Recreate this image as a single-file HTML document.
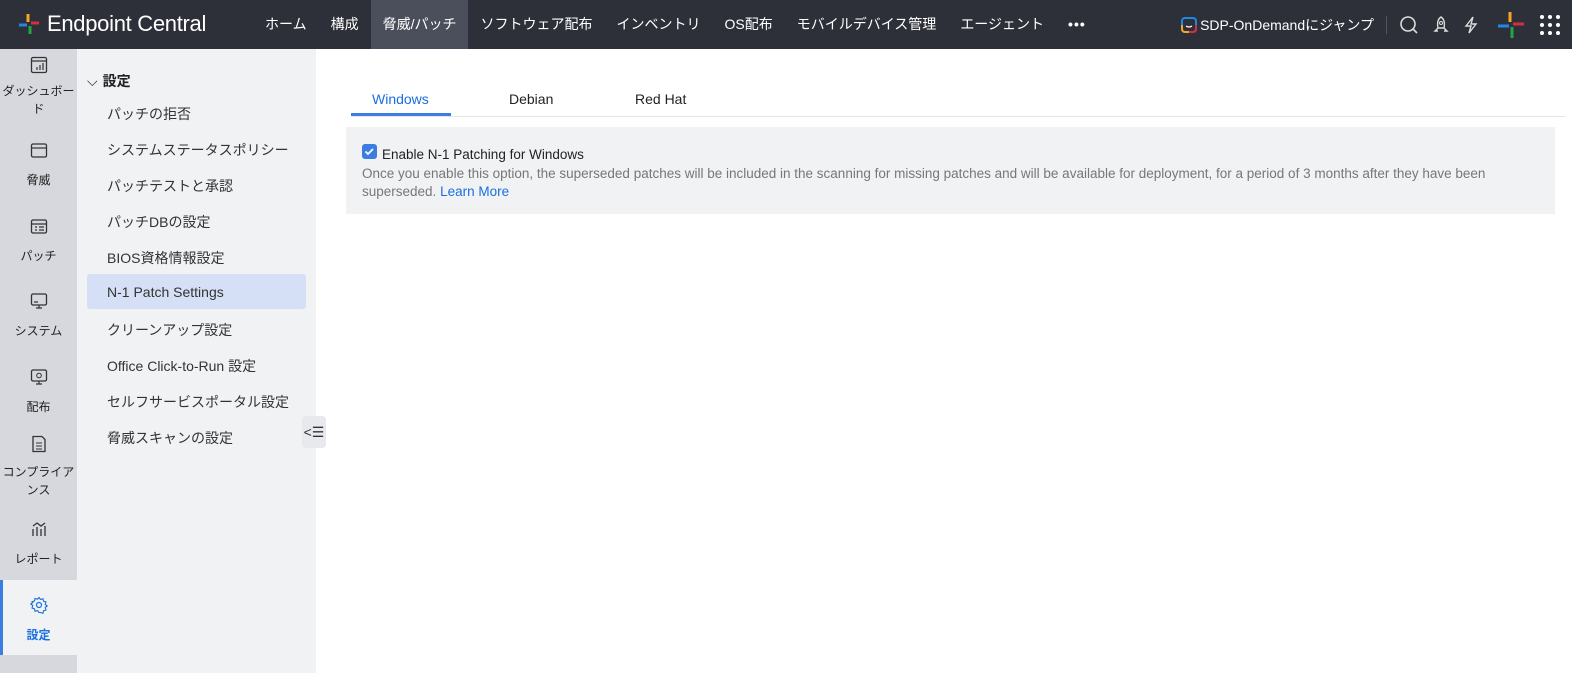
<!DOCTYPE html>
<html><head><meta charset="utf-8">
<style>
*{box-sizing:border-box;margin:0;padding:0}
body{width:1572px;height:673px;overflow:hidden;font-family:"Liberation Sans","Noto Sans CJK JP",sans-serif;background:#fff;position:relative}
.top{position:absolute;left:0;top:0;width:1572px;height:49px;background:#2d3039;color:#fff}
.logo{position:absolute;left:17px;top:11px;display:flex;align-items:center;gap:6px;font-size:22px;letter-spacing:-0.3px}
.nav{position:absolute;left:253px;top:0;display:flex;height:49px}
.nav div{padding:0 12px;line-height:49px;font-size:14px}
.nav .act{background:#4b4f5c}
.rt{position:absolute;right:0;top:0;height:49px;display:flex;align-items:center}
.s1{position:absolute;left:0;top:49px;width:77px;height:624px;background:#d7d8dd}
.s1 .it{position:absolute;left:0;width:77px;text-align:center;font-size:12px;color:#222;line-height:18px}
.s1 svg{display:block;margin:0 auto 12px}
.s2{position:absolute;left:77px;top:49px;width:239px;height:624px;background:#f1f2f4}
.s2 .i{position:absolute;left:30px;font-size:14px;color:#333}
.sel{position:absolute;left:10px;top:225px;width:219px;height:35px;background:#d5e0f6;border-radius:3px}
.tabs{position:absolute;left:351px;top:84px;width:1214px;height:33px;border-bottom:1px solid #e4e6ea;font-size:14px;color:#222}
.tabs div{position:absolute;top:7px}
.card{position:absolute;left:346px;top:127px;width:1209px;height:87px;background:#f1f2f4}
</style></head><body>
<div class="top">
 <div class="logo">
  <svg width="24" height="24" viewBox="0 0 24 24"><path d="M11 2v8" stroke="#f5a623" stroke-width="3"/><path d="M14 11h8" stroke="#d62e3f" stroke-width="3"/><path d="M13 14v8" stroke="#25a345" stroke-width="3"/><path d="M2 13h8" stroke="#1e88e5" stroke-width="3"/></svg>
  <span>Endpoint Central</span></div>
 <div class="nav"><div>ホーム</div><div>構成</div><div class="act">脅威/パッチ</div><div>ソフトウェア配布</div><div>インベントリ</div><div>OS配布</div><div>モバイルデバイス管理</div><div>エージェント</div><div style="font-weight:bold;letter-spacing:1px">•••</div></div>
 <div class="rt">
  <svg width="16" height="16" viewBox="0 0 16 16" style="margin-right:3px"><rect x="1" y="1" width="14" height="14" rx="3" fill="none" stroke="#1e88e5" stroke-width="2"/><path d="M1 8v4a3 3 0 003 3h4" stroke="#f5a623" stroke-width="2" fill="none"/><path d="M15 8v4a3 3 0 01-3 3H8" stroke="#d62e3f" stroke-width="2" fill="none"/><path d="M5 9q3 2 6 0" stroke="#fff" stroke-width="1.3" fill="none"/></svg>
  <span style="font-size:14px">SDP-OnDemandにジャンプ</span>
  <span style="width:1px;height:18px;background:#555;margin:0 12px"></span>
  <svg width="20" height="20" viewBox="0 0 20 20" style="margin-right:12px"><circle cx="9" cy="9" r="7" fill="none" stroke="#ddd" stroke-width="1.6"/><path d="M14 14l4 4" stroke="#ddd" stroke-width="1.6"/></svg>
  <svg width="20" height="20" viewBox="0 0 20 20" style="margin-right:10px"><path d="M10 2c3 2 4 6 3 11H7C6 8 7 4 10 2zM7 13l-3 3h3M13 13l3 3h-3" fill="none" stroke="#ddd" stroke-width="1.4"/><circle cx="10" cy="8" r="1.5" fill="none" stroke="#ddd"/></svg>
  <svg width="20" height="20" viewBox="0 0 20 20" style="margin-right:14px"><path d="M12 2L5 11h5l-2 7 7-9h-5z" fill="none" stroke="#ddd" stroke-width="1.4"/></svg>
  <svg width="32" height="32" viewBox="0 0 32 32" style="margin-right:12px"><path d="M15 3v10" stroke="#f5a623" stroke-width="3"/><path d="M18 15h11" stroke="#d62e3f" stroke-width="3"/><path d="M17 18v11" stroke="#25a345" stroke-width="3"/><path d="M3 17h11" stroke="#1e88e5" stroke-width="3"/></svg>
  <svg width="22" height="22" viewBox="0 0 22 22" style="margin-right:11px" fill="#fff"><circle cx="3" cy="3" r="2"/><circle cx="11" cy="3" r="2"/><circle cx="19" cy="3" r="2"/><circle cx="3" cy="11" r="2"/><circle cx="11" cy="11" r="2"/><circle cx="19" cy="11" r="2"/><circle cx="3" cy="19" r="2"/><circle cx="11" cy="19" r="2"/><circle cx="19" cy="19" r="2"/></svg>
 </div>
</div>
<div class="s1">
 <div class="it" style="top:7px"><svg width="18" height="18" viewBox="0 0 18 18" style="margin-bottom:8px"><rect x="1.5" y="1.5" width="15" height="15" rx="1.5" fill="none" stroke="#333" stroke-width="1.3"/><path d="M2 5h14M7 14v-3M10 14v-5M13 14v-7" stroke="#333" stroke-width="1.2"/></svg>ダッシュボー<br>ド</div>
 <div class="it" style="top:92px"><svg width="18" height="18" viewBox="0 0 18 18"><rect x="1.5" y="3" width="15" height="13" rx="1.5" fill="none" stroke="#333" stroke-width="1.3"/><path d="M2 7h14" stroke="#333" stroke-width="1.2"/></svg>脅威</div>
 <div class="it" style="top:168px"><svg width="18" height="18" viewBox="0 0 18 18"><rect x="1.5" y="3" width="15" height="13" rx="1.5" fill="none" stroke="#333" stroke-width="1.3"/><path d="M2 7h14M5 10h2M9 10h5M5 13h2M9 13h5" stroke="#333" stroke-width="1.2"/></svg>パッチ</div>
 <div class="it" style="top:243px"><svg width="18" height="18" viewBox="0 0 18 18"><rect x="1.5" y="2" width="15" height="11" rx="1.5" fill="none" stroke="#333" stroke-width="1.3"/><path d="M6 16h6M9 13v3M4 10h4" stroke="#333" stroke-width="1.2"/></svg>システム</div>
 <div class="it" style="top:319px"><svg width="18" height="18" viewBox="0 0 18 18"><rect x="1.5" y="2" width="15" height="11" rx="1.5" fill="none" stroke="#333" stroke-width="1.3"/><path d="M6 16h6M9 13v3" stroke="#333" stroke-width="1.2"/><circle cx="9" cy="7.5" r="2.3" fill="none" stroke="#333"/></svg>配布</div>
 <div class="it" style="top:386px"><svg width="18" height="18" viewBox="0 0 18 18" style="margin-bottom:10px"><path d="M3 1.5h9l3 3v12H3z" fill="none" stroke="#333" stroke-width="1.3"/><path d="M6 8h6M6 11h6M6 14h6" stroke="#333"/></svg>コンプライア<br>ンス</div>
 <div class="it" style="top:471px"><svg width="18" height="18" viewBox="0 0 18 18"><path d="M3 16V9M7 16V7M11 16V9M15 16V6M3 6l4-3 4 3 4-3" fill="none" stroke="#333" stroke-width="1.3"/></svg>レポート</div>
 <div style="position:absolute;left:0;top:531px;width:77px;height:75px;background:#f1f2f4;border-left:3px solid #3b7de0"></div>
 <div class="it" style="top:547px;color:#1a6fe0;font-weight:bold"><svg width="18" height="18" viewBox="0 0 18 18"><circle cx="9" cy="9" r="2.5" fill="none" stroke="#1a6fe0" stroke-width="1.2"/><path d="M9 1.5l1.5 2 2.5-.8.5 2.5 2.5.8-.8 2.5 2 1.5-2 1.5.8 2.5-2.5.8-.5 2.5-2.5-.8L9 16.5l-1.5-2-2.5.8-.5-2.5-2.5-.8.8-2.5-2-1.5 2-1.5L2 5.7l2.5-.8.5-2.5 2.5.8z" fill="none" stroke="#1a6fe0" stroke-width="1.1"/></svg>設定</div>
</div>
<div class="s2">
 <div style="position:absolute;left:10px;top:22px;font-size:14px;font-weight:bold;color:#222"><span style="font-weight:normal;margin-right:5px">⌵</span>設定</div>
 <div class="sel"></div>
 <div class="i" style="top:55px">パッチの拒否</div>
 <div class="i" style="top:91px">システムステータスポリシー</div>
 <div class="i" style="top:127px">パッチテストと承認</div>
 <div class="i" style="top:163px">パッチDBの設定</div>
 <div class="i" style="top:199px">BIOS資格情報設定</div>
 <div class="i" style="top:235px">N-1 Patch Settings</div>
 <div class="i" style="top:271px">クリーンアップ設定</div>
 <div class="i" style="top:307px">Office Click-to-Run 設定</div>
 <div class="i" style="top:343px">セルフサービスポータル設定</div>
 <div class="i" style="top:379px">脅威スキャンの設定</div>
 <div style="position:absolute;left:225px;top:367px;width:24px;height:32px;background:#e8e9ec;border-radius:4px;font-size:14px;color:#333;line-height:32px;text-align:center">&lt;☰</div>
</div>
<div class="tabs">
 <div style="left:21px;color:#1a6fe0">Windows</div>
 <div style="left:158px">Debian</div>
 <div style="left:284px">Red Hat</div>
 <div style="left:0;top:29px;width:100px;height:3px;background:#3b7de0"></div>
</div>
<div class="card">
 <div style="position:absolute;left:16px;top:17px;width:15px;height:15px;background:#3b7de0;border-radius:3px"><svg width="15" height="15" viewBox="0 0 15 15"><path d="M3.5 7.5l2.5 2.5 5-5" fill="none" stroke="#fff" stroke-width="1.8"/></svg></div>
 <div style="position:absolute;left:36px;top:20px;font-size:13.5px;color:#222">Enable N-1 Patching for Windows</div>
 <div style="position:absolute;left:16px;top:38px;width:1140px;font-size:13.5px;line-height:18px;color:#777">Once you enable this option, the superseded patches will be included in the scanning for missing patches and will be available for deployment, for a period of 3 months after they have been superseded. <span style="color:#1a6fe0">Learn More</span></div>
</div>
</body></html>
